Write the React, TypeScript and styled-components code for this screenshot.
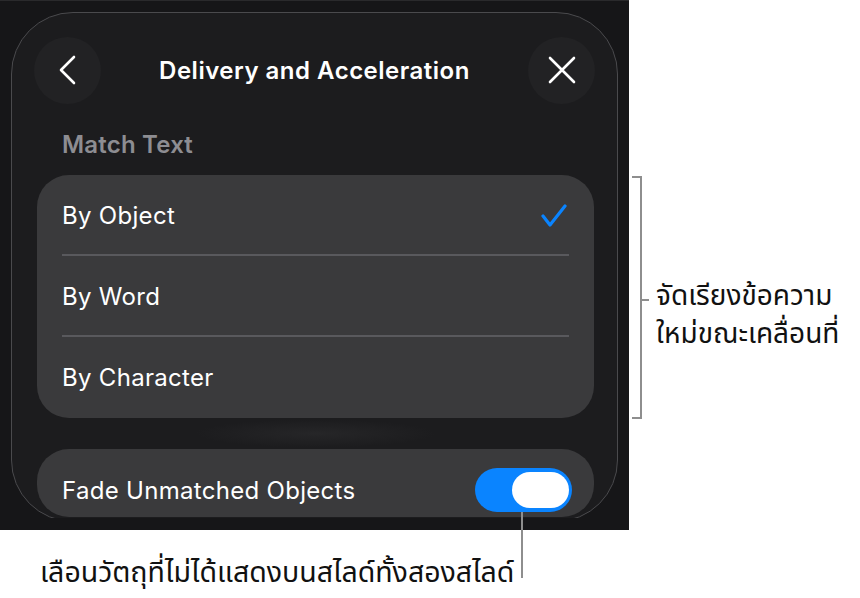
import React from 'react';
import styled, { createGlobalStyle } from 'styled-components';

const Global = createGlobalStyle`
  body {
    margin: 0;
    background: #ffffff;
    font-family: Inter, "Noto Sans", sans-serif;
  }
`;

const Stage = styled.div`
  position: relative;
  width: 860px;
  height: 598px;
  display: grid;
  grid-template-columns: 629px 1fr;
  grid-template-rows: 530px 1fr;
  overflow: hidden;
`;

const Screen = styled.div`
  background: #161618;
  padding-bottom: 12px;
  box-sizing: border-box;
  border-top: 1px solid #2a2a2c;
`;

const Viewport = styled.div`
  height: 100%;
  padding: 11px 11px 0 11px;
  box-sizing: border-box;
  overflow: hidden;
`;

const Sheet = styled.div`
  height: 510px;
  box-sizing: border-box;
  border: 1px solid #4a4a4d;
  border-radius: 62px;
  background: #1c1c1e;
  padding: 23px 22px 0 22px;
`;

const Header = styled.div`
  display: flex;
  align-items: center;
  justify-content: space-between;
  height: 68px;
`;

const RoundButton = styled.button`
  width: 67px;
  height: 67px;
  border-radius: 50%;
  border: none;
  background: #222224;
  display: flex;
  align-items: center;
  justify-content: center;
  padding: 0;
`;

const Title = styled.h1`
  margin: 0;
  font-size: 24px;
  font-weight: 600;
  color: #ffffff;
  letter-spacing: 0.5px;
`;

const SectionLabel = styled.div`
  margin: 27px 0 16px 28px;
  font-size: 24px;
  font-weight: 600;
  color: #8d8d92;
  line-height: 28px;
  letter-spacing: 0.2px;
`;

const Group = styled.div`
  margin-left: 3px;
  width: 557px;
  background: #3a3a3c;
  border-radius: 32px;
  overflow: hidden;
`;

const Row = styled.div<{ $divider?: boolean }>`
  position: relative;
  height: 81px;
  display: flex;
  align-items: center;
  justify-content: space-between;
  padding: 0 27px 0 25px;
  font-size: 24px;
  letter-spacing: 0.3px;
  color: #ffffff;
  ${(p) =>
    p.$divider &&
    `
    &::after {
      content: '';
      position: absolute;
      left: 25px;
      right: 25px;
      bottom: 0;
      height: 2px;
      background: #59595d;
    }
  `}
`;

const Shade = styled.div`
  height: 31px;
  background: radial-gradient(ellipse 120px 14px at 50% 50%, #262628, #1c1c1e);
  width: 557px;
  margin-left: 3px;
`;

const ToggleRow = styled(Row)`
  height: 68px;
  padding-top: 14px;
  padding-right: 22px;
  background: #3a3a3c;
  border-radius: 32px;
  width: 557px;
  box-sizing: border-box;
  margin-left: 3px;
`;

const Toggle = styled.div`
  width: 97px;
  height: 44px;
  border-radius: 22px;
  background: #0a84ff;
  display: flex;
  align-items: center;
  justify-content: flex-end;
  padding-right: 3px;
  box-sizing: border-box;
`;

const Knob = styled.div`
  width: 57px;
  height: 36px;
  border-radius: 18px;
  background: #ffffff;
`;

const Side = styled.div`
  display: flex;
  align-items: flex-start;
  padding-top: 176px;
  padding-left: 3px;
`;

const Bracket = styled.div`
  position: relative;
  width: 10px;
  height: 243px;
  box-sizing: border-box;
  border: 2px solid #8e8e8e;
  border-left: none;
  &::after {
    content: '';
    position: absolute;
    left: 8px;
    top: 121px;
    width: 9px;
    height: 2px;
    background: #8e8e8e;
  }
`;

const SideText = styled.div`
  margin: 102px 0 0 14px;
  font-family: "Noto Sans Thai", "Noto Sans", "DejaVu Sans", sans-serif;
  font-size: 28px;
  line-height: 38px;
  color: #111111;
  white-space: nowrap;
`;

const Caption = styled.div`
  grid-column: 1 / 3;
  padding: 26px 0 0 40px;
  font-family: "Noto Sans Thai", "Noto Sans", "DejaVu Sans", sans-serif;
  font-size: 28.5px;
  line-height: 36px;
  color: #111111;
`;

const Leader = styled.div`
  position: absolute;
  left: 521px;
  top: 512px;
  width: 2px;
  height: 66px;
  background: #8e8e8e;
`;

const Chevron = () => (
  <svg width="20" height="30" viewBox="0 0 20 30">
    <path d="M16 2 L3 15 L16 28" fill="none" stroke="#fff" strokeWidth="2.6" strokeLinecap="round" strokeLinejoin="round" />
  </svg>
);

const Cross = () => (
  <svg width="28" height="28" viewBox="0 0 28 28">
    <path d="M2 2 L26 26 M26 2 L2 26" fill="none" stroke="#fff" strokeWidth="2.6" strokeLinecap="round" />
  </svg>
);

const Check = () => (
  <svg width="26" height="24" viewBox="0 0 26 24">
    <path d="M2 12 L9 21 L24 2" fill="none" stroke="#0a84ff" strokeWidth="3.2" strokeLinecap="round" strokeLinejoin="round" />
  </svg>
);

const options = ['By Object', 'By Word', 'By Character'];

export default function App() {
  return (
    <>
      <Global />
      <Stage>
        <Screen>
          <Viewport>
            <Sheet>
              <Header>
                <RoundButton aria-label="Back">
                  <Chevron />
                </RoundButton>
                <Title>Delivery and Acceleration</Title>
                <RoundButton aria-label="Close">
                  <Cross />
                </RoundButton>
              </Header>
              <SectionLabel>Match Text</SectionLabel>
              <Group>
                {options.map((o, i) => (
                  <Row key={o} $divider={i < options.length - 1}>
                    {o}
                    {i === 0 && <Check />}
                  </Row>
                ))}
              </Group>
              <Shade />
              <ToggleRow>
                Fade Unmatched Objects
                <Toggle>
                  <Knob />
                </Toggle>
              </ToggleRow>
            </Sheet>
          </Viewport>
        </Screen>
        <Side>
          <Bracket />
          <SideText>
            จัดเรียงข้อความ
            <br />
            ใหม่ขณะเคลื่อนที่
          </SideText>
        </Side>
        <Caption>เลือนวัตถุที่ไม่ได้แสดงบนสไลด์ทั้งสองสไลด์</Caption>
        <Leader />
      </Stage>
    </>
  );
}
